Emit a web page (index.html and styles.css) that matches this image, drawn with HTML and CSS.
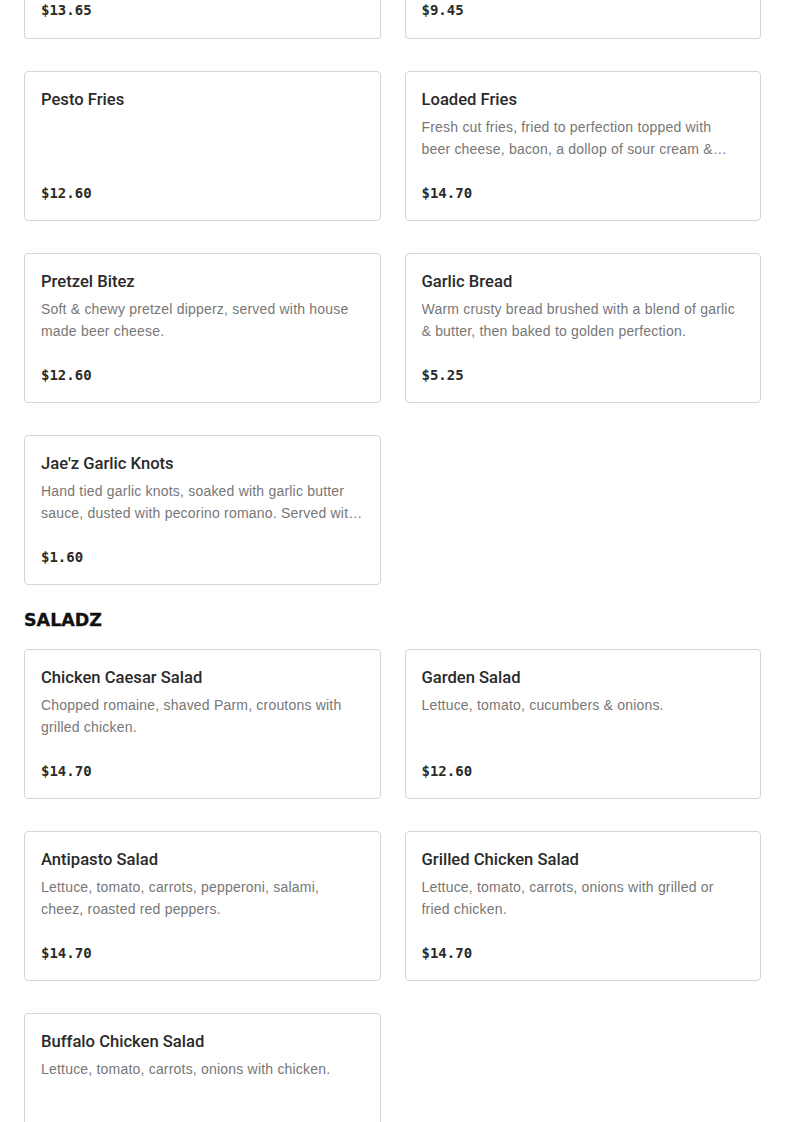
FILE: index.html
```html
<!DOCTYPE html>
<html lang="en">
<head>
  <meta charset="UTF-8">
  <meta name="viewport" content="width=device-width, initial-scale=1.0">
  <title>Menu</title>
  <link rel="stylesheet" href="styles.css">
</head>
<body>
  <div class="menu">
    <div class="grid">
      <div class="card cut"><div class="price">$13.65</div></div>
      <div class="card cut"><div class="price">$9.45</div></div>

      <div class="card">
        <div class="name">Pesto Fries</div>
        <div class="desc"></div>
        <div class="price">$12.60</div>
      </div>
      <div class="card">
        <div class="name">Loaded Fries</div>
        <div class="desc">Fresh cut fries, fried to perfection topped with beer cheese, bacon, a dollop of sour cream &amp; chives.</div>
        <div class="price">$14.70</div>
      </div>

      <div class="card">
        <div class="name">Pretzel Bitez</div>
        <div class="desc">Soft &amp; chewy pretzel dipperz, served with house made beer cheese.</div>
        <div class="price">$12.60</div>
      </div>
      <div class="card">
        <div class="name">Garlic Bread</div>
        <div class="desc">Warm crusty bread brushed with a blend of garlic &amp; butter, then baked to golden perfection.</div>
        <div class="price">$5.25</div>
      </div>

      <div class="card">
        <div class="name">Jae'z Garlic Knots</div>
        <div class="desc">Hand tied garlic knots, soaked with garlic butter sauce, dusted with pecorino romano. Served with marinara.</div>
        <div class="price">$1.60</div>
      </div>
    </div>

    <h2 class="section">SALADZ</h2>
    <div class="grid">
      <div class="card">
        <div class="name">Chicken Caesar Salad</div>
        <div class="desc">Chopped romaine, shaved Parm, croutons with grilled chicken.</div>
        <div class="price">$14.70</div>
      </div>
      <div class="card">
        <div class="name">Garden Salad</div>
        <div class="desc">Lettuce, tomato, cucumbers &amp; onions.</div>
        <div class="price">$12.60</div>
      </div>

      <div class="card">
        <div class="name">Antipasto Salad</div>
        <div class="desc">Lettuce, tomato, carrots, pepperoni, salami, cheez, roasted red peppers.</div>
        <div class="price">$14.70</div>
      </div>
      <div class="card">
        <div class="name">Grilled Chicken Salad</div>
        <div class="desc">Lettuce, tomato, carrots, onions with grilled or fried chicken.</div>
        <div class="price">$14.70</div>
      </div>

      <div class="card">
        <div class="name">Buffalo Chicken Salad</div>
        <div class="desc">Lettuce, tomato, carrots, onions with chicken.</div>
        <div class="price">$14.70</div>
      </div>
    </div>
  </div>
</body>
</html>
```

FILE: styles.css
```css
body {
  margin: 0;
  padding: 0;
  background-color: #fff;
  font-family: "Liberation Sans", Arial, sans-serif;
}
.menu {
  padding: 0 24px;
}
.grid {
  display: grid;
  grid-template-columns: 1fr 1fr;
  column-gap: 24px;
  row-gap: 32px;
}
.card {
  border: 1px solid #d6d6d6;
  border-radius: 4px;
  padding: 16px 16px 15px;
  background-color: #fff;
}
.card.cut {
  border-top: none;
  border-radius: 0 0 4px 4px;
  padding-top: 0;
  padding-bottom: 16px;
  margin-top: -2px;
}
.name {
  font-family: Roboto, "Liberation Sans", sans-serif;
  font-size: 16.6px;
  line-height: 24px;
  font-weight: 500;
  color: #2a2a2a;
}
.desc {
  margin-top: 4px;
  font-size: 14px;
  line-height: 22px;
  letter-spacing: 0.2px;
  height: 44px;
  color: #777;
  display: -webkit-box;
  -webkit-line-clamp: 2;
  -webkit-box-orient: vertical;
  overflow: hidden;
}
.price {
  margin-top: 21px;
  font-family: "DejaVu Sans Mono", "Liberation Mono", monospace;
  font-size: 14px;
  line-height: 24px;
  font-weight: bold;
  color: #2a2a2a;
}
.cut .price {
  margin-top: 0;
}
.section {
  margin: 23px 0 17px;
  font-family: "DejaVu Sans", sans-serif;
  font-size: 17.5px;
  line-height: 24px;
  font-weight: bold;
  color: #111;
  -webkit-text-stroke: 0.3px #111;
}
```
